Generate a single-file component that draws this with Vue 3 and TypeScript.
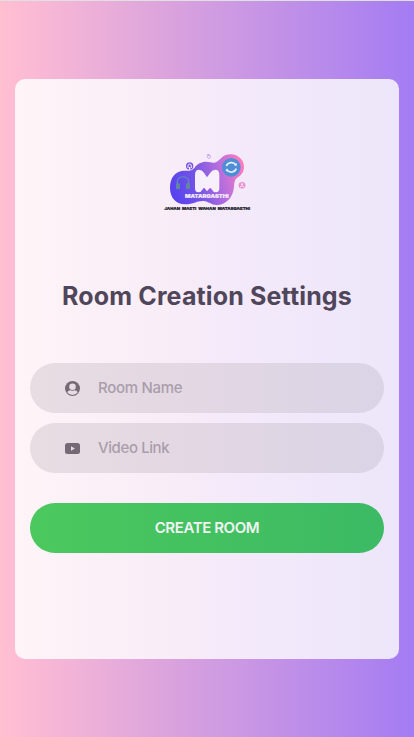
<script setup lang="ts">
import { ref } from 'vue'

const roomName = ref<string>('')
const videoLink = ref<string>('')
</script>

<template>
  <main class="page">
    <section class="card">
      <svg class="logo" viewBox="6 0 300 225" role="img" aria-label="Matargasthi">
        <defs>
          <linearGradient id="blob" gradientUnits="userSpaceOnUse" x1="45" y1="130" x2="268" y2="75">
            <stop offset="0" stop-color="#5540f0" />
            <stop offset="0.35" stop-color="#7355e6" />
            <stop offset="0.72" stop-color="#bd70dc" />
            <stop offset="1" stop-color="#ff7bbd" />
          </linearGradient>
        </defs>
        <path
          fill="url(#blob)"
          d="M85 77C100 77 110 79 119 68C128 54 147 47 166 52C184 57 190 46 200 38C217 22 246 26 259 43C273 61 268 86 250 96C239 102 238 111 237 126C234 158 213 180 185 180C169 180 161 169 145 168C125 167 117 178 91 178C63 178 45 158 45 128C45 98 61 78 85 77Z"
        />
        <path
          fill="#f8effc"
          d="M120 130V90Q120 74 132 74Q141 74 147 83L156 97L166 83Q172 74 181 74Q193 74 193 90V130Q193 142 183 142Q175 142 171 134Q167 127 164 130L156 139L149 130Q145 127 142 134Q138 142 130 142Q120 142 120 130Z"
        />
        <path d="M67 117V109C67 91 101 91 101 109V117" fill="none" stroke="#6286bd" stroke-width="4" />
        <rect x="63" y="114" width="12" height="19" rx="5" fill="#6288a0" />
        <rect x="93" y="114" width="12" height="19" rx="5" fill="#6288a0" />
        <circle cx="229" cy="67" r="28" fill="#4f8dd7" />
        <path d="M214 63C219 51 235 49 243 60M244 71C239 83 223 85 215 74" fill="none" stroke="#e8effc" stroke-width="5" />
        <path d="M239 61h5v-6M219 73h-5v6" fill="none" stroke="#e8effc" stroke-width="3" />
        <circle cx="104" cy="63" r="11" fill="#7657df" />
        <path d="M99 69v-6q0-6 5-6t5 6v6" fill="none" stroke="#f4eaff" stroke-width="3" />
        <rect x="102" y="66" width="4" height="9" fill="#f8effc" />
        <circle cx="162" cy="35" r="5" fill="none" stroke="#c5a0e5" stroke-width="2.5" />
        <path d="M155 29h7v4" fill="none" stroke="#b98add" stroke-width="2" />
        <circle cx="261" cy="121" r="10" fill="#ec91cf" />
        <circle cx="261" cy="118" r="3" fill="#fbe9fb" />
        <path d="M255 126q6-7 12 0" fill="none" stroke="#fbe9fb" stroke-width="3" />
        <text class="brand" x="90" y="158" textLength="131" lengthAdjust="spacingAndGlyphs">MATARGASTHI</text>
        <text class="tagline" x="28" y="194" textLength="257" lengthAdjust="spacingAndGlyphs">JAHAN MASTI WAHAN MATARGASTHI</text>
      </svg>

      <h1>Room Creation Settings</h1>

      <form @submit.prevent>
        <label class="field">
          <svg class="icon" viewBox="0 0 15 15" aria-hidden="true">
            <circle cx="7.5" cy="7.5" r="7.5" />
            <circle class="cutout" cx="7.5" cy="5.700" r="3.300" />
            <path class="cutout" d="M2.200 11.200Q3.300 9.300 5.400 9.300Q7.500 10.300 9.600 9.300Q11.700 9.300 12.800 11.200Q11 13.900 7.500 13.900T2.200 11.200Z" />
          </svg>
          <input v-model="roomName" type="text" placeholder="Room Name" />
        </label>
        <label class="field">
          <svg class="icon" viewBox="0 0 15 15" aria-hidden="true">
            <path fill-rule="evenodd" d="M2.500 2Q0 2 0 4.500v6Q0 13 2.500 13h10Q15 13 15 10.500v-6Q15 2 12.500 2zM6 5.300v4.400l3.900-2.200z" />
          </svg>
          <input v-model="videoLink" class="link" type="text" placeholder="Video Link" />
        </label>
        <button type="submit"><span>CREATE ROOM</span></button>
      </form>
    </section>
  </main>
</template>

<style>
body {
  margin: 0;
}
</style>

<style scoped>
.page {
  box-sizing: border-box;
  min-height: 737px;
  padding: 78px 15px;
  border-top: 1px solid #e0e0e3;
  background: linear-gradient(90deg, #ffc0d0 0%, #ffbdd3 3%, #dda5dc 38%, #a47cf3 100%);
  font-family: Inter, sans-serif;
}

.card {
  box-sizing: border-box;
  height: 580px;
  padding: 66px 15px 0;
  border-radius: 10px;
  background: linear-gradient(90deg, #fff4f7 0%, #f7ebf8 48%, #f4eafa 53%, #ede6fa 100%);
}

.logo {
  display: block;
  width: 100px;
  height: 75px;
  margin: 0 auto;
}

.brand {
  fill: #f5eafc;
  stroke: #f5eafc;
  stroke-width: 0.6;
  font: 900 15.5px Inter, sans-serif;
}

.tagline {
  fill: #211c29;
  stroke: #211c29;
  stroke-width: 0.6;
  font: 900 11.5px Inter, sans-serif;
  word-spacing: 3px;
}

h1 {
  margin: 57px 0 48px;
  color: #50465a;
  font-size: 25px;
  font-weight: 650;
  line-height: 38px;
  letter-spacing: 0.14px;
  text-align: center;
  white-space: nowrap;
}

.field {
  box-sizing: border-box;
  display: flex;
  align-items: center;
  height: 50px;
  margin-bottom: 10px;
  padding: 0 35px;
  border-radius: 25px;
  background: linear-gradient(90deg, #e7dde2, #e2d7e3 50%, #dad4e6);
}

.icon {
  flex: none;
  width: 15px;
  height: 15px;
  margin: 1px 18px 0 0;
  fill: #766976;
}

.cutout {
  fill: #e6dce2;
}

input {
  min-width: 0;
  flex: 1;
  padding: 0;
  border: 0;
  outline: 0;
  background: transparent;
  color: #50465a;
  font: 500 15px/20px Inter, sans-serif;
  letter-spacing: -0.3px;
}

.link {
  letter-spacing: -0.4px;
}

input::placeholder {
  color: #aa9dab;
  opacity: 1;
}

button {
  width: 100%;
  height: 50px;
  margin: 20px 0 0;
  padding: 0;
  border: 0;
  border-radius: 25px;
  background: linear-gradient(90deg, #4bc85d, #3cba64);
  color: #f0f3f4;
  font: 600 15px/20px Inter, sans-serif;
  letter-spacing: -0.4px;
}
</style>
